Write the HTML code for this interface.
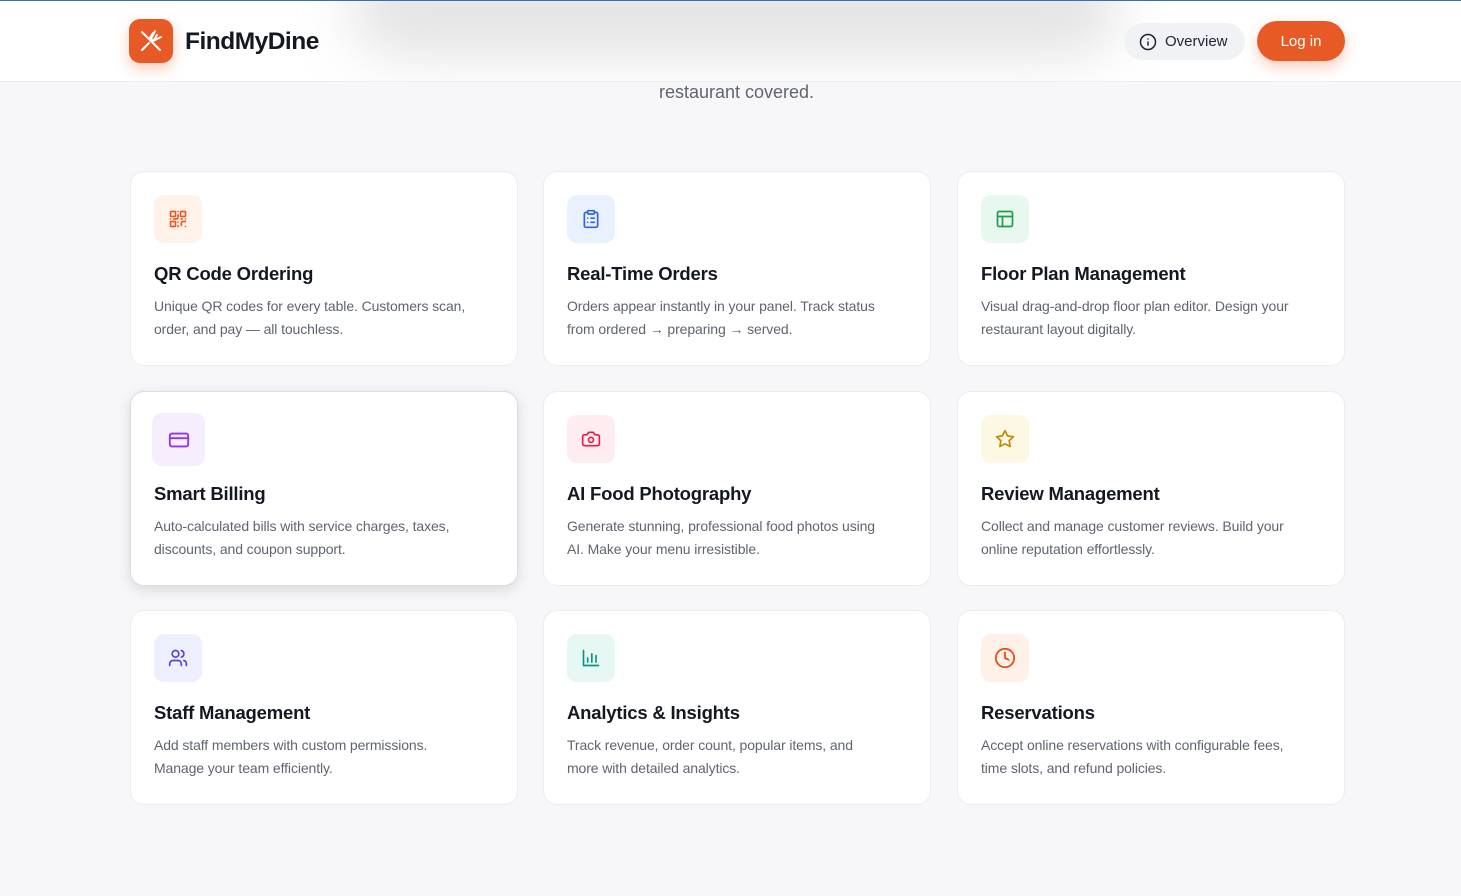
<!DOCTYPE html>
<html><head><meta charset="utf-8"><style>
*{box-sizing:border-box;margin:0;padding:0}
body{width:1461px;height:896px;overflow:hidden;background:#f7f7f9;font-family:"Liberation Sans",sans-serif;position:relative}
.top{position:absolute;top:0;left:0;width:1461px;height:1px;background:#3b6db3;z-index:5}
header{position:absolute;top:1px;left:0;width:1461px;height:81px;background:#fff;border-bottom:1px solid #ececef;overflow:hidden}
.blur{position:absolute;left:350px;top:-40px;width:770px;height:95px;border-radius:50px;background:#d8d8da;filter:blur(28px);opacity:.7}
.logo{position:absolute;left:129px;top:18px;width:44px;height:44px;border-radius:11px;background:#e85a25;box-shadow:0 6px 14px rgba(232,90,37,.3)}
.brand{position:absolute;left:185px;top:27px;font-size:24.5px;font-weight:bold;color:#141821;letter-spacing:-.5px}
.ov{position:absolute;left:1124px;top:22px;width:121px;height:37px;border-radius:19px;background:#f1f2f5;font-size:15px;color:#1d2230;padding:10px 0 0 41px}
.ov svg{position:absolute;left:15px;top:10px}
.login{position:absolute;left:1257px;top:20px;width:88px;height:40px;border-radius:20px;background:#e85a25;color:#fff;font-size:15px;text-align:center;line-height:42px;box-shadow:0 6px 14px rgba(232,90,37,.3)}
.sub{position:absolute;top:82px;left:0;width:1461px;text-align:center;font-size:18px;color:#5f6470;padding-left:12px}
.card{position:absolute;width:388px;height:195px;background:#fff;border:1px solid #ececf0;border-radius:14px}
.card .ic{position:absolute;left:23px;top:23px;width:48px;height:48px;border-radius:10px;display:flex;align-items:center;justify-content:center}
.card h3{position:absolute;left:23px;top:91px;font-size:18.5px;color:#141821;letter-spacing:-.2px}
.card p{position:absolute;left:23px;top:123px;width:345px;font-size:14px;line-height:23px;color:#5f6470;letter-spacing:-.1px}
.hov{box-shadow:0 4px 14px rgba(0,0,0,.12);border-color:#dcdce2}
.hov .ic{left:21px;top:21px;width:53px;height:53px}
svg{fill:none;stroke-width:2;stroke-linecap:round;stroke-linejoin:round}
</style></head><body>
<div class="top"></div>
<header><div class="blur"></div>
<div class="logo"><svg width="44" height="44" viewBox="0 0 44 44" style="stroke:#fff;stroke-width:2"><path d="M13 13l18 18M13 31l7-7M26 12l-4 8 2 2 8-4M24 14l-3 5M28 16l-3 5"/><path d="M14 30l-1 1"/></svg></div>
<div class="brand">FindMyDine</div>
<div class="ov"><svg width="18" height="18" viewBox="0 0 24 24" stroke="#1d2230"><circle cx="12" cy="12" r="10"/><path d="M12 16v-4M12 8h.01"/></svg>Overview</div>
<div class="login">Log in</div>
</header>
<div class="sub">restaurant covered.</div>

<div class="card" style="left:130px;top:171px"><div class="ic" style="background:#fff3e9"><svg width="20" height="20" viewBox="0 0 24 24" stroke="#e85a25"><rect x="3" y="3" width="6" height="6" rx="1"/><rect x="15" y="3" width="6" height="6" rx="1"/><rect x="3" y="15" width="6" height="6" rx="1"/><path d="M21 15h-3a2 2 0 0 0-2 2v3M21 21v.01M12 7v3a2 2 0 0 1-2 2H7M3 12h.01M12 3h.01M12 16v.01M16 12h1M21 12v.01M12 21v-1"/></svg></div><h3>QR Code Ordering</h3><p>Unique QR codes for every table. Customers scan, order, and pay — all touchless.</p></div>
<div class="card" style="left:543px;top:171px"><div class="ic" style="background:#eaf1fe"><svg width="20" height="20" viewBox="0 0 24 24" stroke="#2f62e6"><rect x="8" y="2" width="8" height="4" rx="1"/><path d="M16 4h2a2 2 0 0 1 2 2v14a2 2 0 0 1-2 2H6a2 2 0 0 1-2-2V6a2 2 0 0 1 2-2h2M12 11h4M12 16h4M8 11h.01M8 16h.01"/></svg></div><h3>Real-Time Orders</h3><p>Orders appear instantly in your panel. Track status<br>from ordered → preparing → served.</p></div>
<div class="card" style="left:957px;top:171px"><div class="ic" style="background:#e9f8ee"><svg width="20" height="20" viewBox="0 0 24 24" stroke="#1e9e4a"><rect x="3" y="3" width="18" height="18" rx="2"/><path d="M3 9h18M9 21V9"/></svg></div><h3>Floor Plan Management</h3><p>Visual drag-and-drop floor plan editor. Design your restaurant layout digitally.</p></div>

<div class="card hov" style="left:130px;top:391px"><div class="ic" style="background:#f6edfd"><svg width="22" height="22" viewBox="0 0 24 24" stroke="#9333ea"><rect x="2" y="5" width="20" height="14" rx="2"/><path d="M2 10h20"/></svg></div><h3>Smart Billing</h3><p>Auto-calculated bills with service charges, taxes, discounts, and coupon support.</p></div>
<div class="card" style="left:543px;top:391px"><div class="ic" style="background:#fdecf0"><svg width="20" height="20" viewBox="0 0 24 24" stroke="#e11d48"><path d="M14.5 4h-5L7 7H4a2 2 0 0 0-2 2v9a2 2 0 0 0 2 2h16a2 2 0 0 0 2-2V9a2 2 0 0 0-2-2h-3z"/><circle cx="12" cy="13" r="3"/></svg></div><h3>AI Food Photography</h3><p>Generate stunning, professional food photos using<br>AI. Make your menu irresistible.</p></div>
<div class="card" style="left:957px;top:391px"><div class="ic" style="background:#fdf8e4"><svg width="20" height="20" viewBox="0 0 24 24" stroke="#c08a06"><path d="M12 2l3.09 6.26L22 9.27l-5 4.87 1.18 6.88L12 17.77l-6.18 3.25L7 14.14 2 9.27l6.91-1.01z"/></svg></div><h3>Review Management</h3><p>Collect and manage customer reviews. Build your<br>online reputation effortlessly.</p></div>

<div class="card" style="left:130px;top:610px"><div class="ic" style="background:#eeeffe"><svg width="20" height="20" viewBox="0 0 24 24" stroke="#4f46e5"><path d="M16 21v-2a4 4 0 0 0-4-4H6a4 4 0 0 0-4 4v2"/><circle cx="9" cy="7" r="4"/><path d="M22 21v-2a4 4 0 0 0-3-3.87M16 3.13a4 4 0 0 1 0 7.75"/></svg></div><h3>Staff Management</h3><p>Add staff members with custom permissions.<br>Manage your team efficiently.</p></div>
<div class="card" style="left:543px;top:610px"><div class="ic" style="background:#e7f8f4"><svg width="20" height="20" viewBox="0 0 24 24" stroke="#0d9488"><path d="M3 3v18h18M8 17v-5M13 17V7M18 17v-8"/></svg></div><h3>Analytics &amp; Insights</h3><p>Track revenue, order count, popular items, and<br>more with detailed analytics.</p></div>
<div class="card" style="left:957px;top:610px"><div class="ic" style="background:#fff1e8"><svg width="22" height="22" viewBox="0 0 24 24" stroke="#e8501f"><circle cx="12" cy="12" r="10"/><path d="M12 6v6l4 2"/></svg></div><h3>Reservations</h3><p>Accept online reservations with configurable fees,<br>time slots, and refund policies.</p></div>
</body></html>
